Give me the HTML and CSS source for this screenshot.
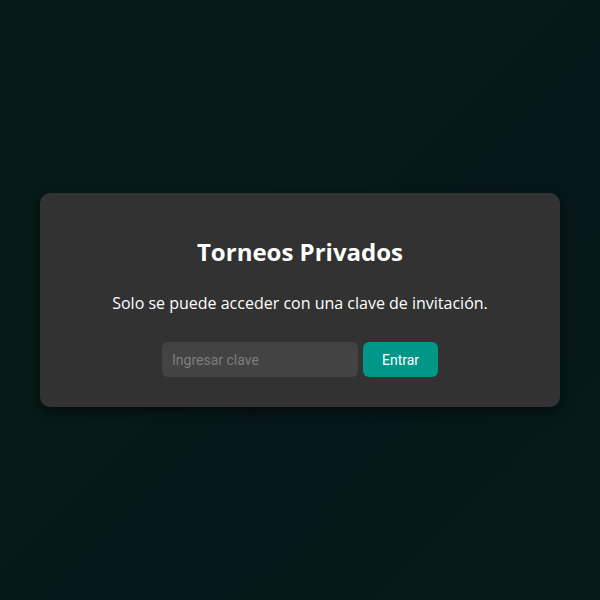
FILE: index.html
```html
<!DOCTYPE html>
<html lang="es">
<head>
<meta charset="utf-8">
<title>Torneos Privados</title>
<link rel="stylesheet" href="styles.css">
</head>
<body>
<main class="page">
  <section class="card">
    <h2 class="title">Torneos Privados</h2>
    <p class="text">Solo se puede acceder con una clave de invitación.</p>
    <form class="form">
      <input class="input" type="text" placeholder="Ingresar clave">
      <button class="btn" type="button">Entrar</button>
    </form>
  </section>
</main>
</body>
</html>
```
FILE: styles.css
```css
html, body {
  margin: 0;
  height: 100%;
}
body {
  background: linear-gradient(135deg, #061b17 0%, #061a16 45%, #05171a 55%, #071a1a 100%);
  font-family: "Open Sans", sans-serif;
  color: #fff;
}
.page {
  height: 100%;
  display: flex;
  align-items: center;
  justify-content: center;
}
.card {
  width: 520px;
  box-sizing: border-box;
  background: #323232;
  border-radius: 10px;
  box-shadow: 0 4px 12px rgba(0, 0, 0, 0.55);
  padding: 42px 30px 30px;
  text-align: center;
}
.title {
  margin: 0 0 24px;
  font-size: 24px;
  font-weight: 700;
  line-height: 33px;
}
.text {
  margin: 0 0 28px;
  font-size: 16px;
  line-height: 22px;
}
.form {
  display: flex;
  justify-content: center;
  gap: 5px;
}
.input {
  width: 196px;
  height: 35px;
  box-sizing: border-box;
  background: #434343;
  border: none;
  border-radius: 6px;
  padding: 0 10px;
  font-family: Roboto, sans-serif;
  font-size: 14px;
  color: #fff;
  outline: none;
}
.input::placeholder {
  color: #7d7d7d;
}
.btn {
  width: 75px;
  height: 35px;
  background: #009688;
  border: none;
  border-radius: 6px;
  font-family: Roboto, sans-serif;
  font-size: 14px;
  color: #fff;
}
```
